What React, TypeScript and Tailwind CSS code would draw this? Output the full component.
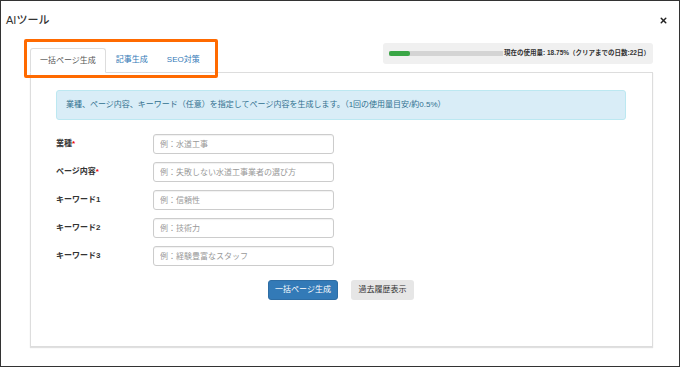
import { X } from "lucide-react";

const fields = [
  { label: "業種", required: true, placeholder: "例：水道工事" },
  { label: "ページ内容", required: true, placeholder: "例：失敗しない水道工事業者の選び方" },
  { label: "キーワード1", required: false, placeholder: "例：信頼性" },
  { label: "キーワード2", required: false, placeholder: "例：技術力" },
  { label: "キーワード3", required: false, placeholder: "例：経験豊富なスタッフ" },
];

export default function App() {
  const usage = 18.75;

  return (
    <div className="relative w-[680px] h-[367px] overflow-hidden border border-[#333] bg-white font-['Liberation_Sans','Noto_Sans_CJK_JP',sans-serif] text-[#333]">
      {/* header */}
      <div className="flex h-[42px] items-center justify-between pb-[4px] pl-[5px] pr-[11px]">
        <h1 className="text-[11px] font-medium leading-none">AIツール</h1>
        <X className="h-[9px] w-[9px] text-[#222]" strokeWidth={4} />
      </div>

      <div className="ml-[29px] w-[623px]">
        {/* tabs + usage */}
        <div className="flex h-[29px] justify-between">
          <div className="flex items-end gap-[1px] text-[8px] leading-none">
            <div className="relative -mb-px flex h-[25px] items-center rounded-t-[3px] border border-b-white border-[#ddd] bg-white px-[9px] text-[#555]">
              一括ページ生成
            </div>
            <div className="flex h-[25px] items-center px-[9px] text-[#337ab7]">記事生成</div>
            <div className="flex h-[25px] items-center px-[9px] text-[#337ab7]">SEO対策</div>
          </div>
          <div className="flex h-[21px] w-[270px] items-center gap-[1px] rounded-[3px] bg-[#f0f0f0] pl-[6px]">
            <div className="h-[5px] w-[114px] bg-[#d4d4d4]">
              <div className="h-full rounded-[2px] bg-[#3aa646]" style={{ width: `${usage}%` }} />
            </div>
            <span className="whitespace-nowrap text-[6.5px] font-bold leading-none text-[#333]">
              現在の使用量: {usage}%（クリアまでの日数:22日）
            </span>
          </div>
        </div>

        {/* panel */}
        <div className="h-[275px] border border-[#ddd] shadow-[0_1px_1px_rgba(0,0,0,0.12)] pl-[25px] pr-[26px] pt-[17px]">
          <div className="flex h-[30px] items-center rounded-[3px] border border-[#bce8f1] bg-[#d9edf7] px-[9px] text-[8px] text-[#31708f]">
            業種、ページ内容、キーワード（任意）を指定してページ内容を生成します。（1回の使用量目安/約0.5%）
          </div>

          <div className="mt-[14px] flex flex-col gap-[8px]">
            {fields.map((f) => (
              <div key={f.label} className="flex items-center">
                <label className="w-[97px] text-[8px] font-bold leading-none">
                  {f.label}
                  {f.required && <span className="text-[#e00]">*</span>}
                </label>
                <input
                  readOnly
                  placeholder={f.placeholder}
                  className="h-[20px] w-[181px] rounded-[3px] border border-[#ccc] bg-white pl-[6px] text-[8px] shadow-[inset_0_1px_1px_rgba(0,0,0,0.06)] outline-none placeholder:text-[#999]"
                />
              </div>
            ))}
          </div>

          <div className="mt-[14px] flex justify-center gap-[13px] text-[8px]">
            <button className="h-[20px] w-[70px] rounded-[3px] border border-[#2e6da4] bg-[#337ab7] text-white">
              一括ページ生成
            </button>
            <button className="h-[20px] w-[63px] rounded-[3px] bg-[#e6e6e6] text-[#333]">
              過去履歴表示
            </button>
          </div>
        </div>
      </div>

      {/* orange annotation frame */}
      <div className="absolute left-[23px] top-[38px] h-[39px] w-[194px] rounded-[2px] border-[3px] border-[#ff6a00]" />
    </div>
  );
}
